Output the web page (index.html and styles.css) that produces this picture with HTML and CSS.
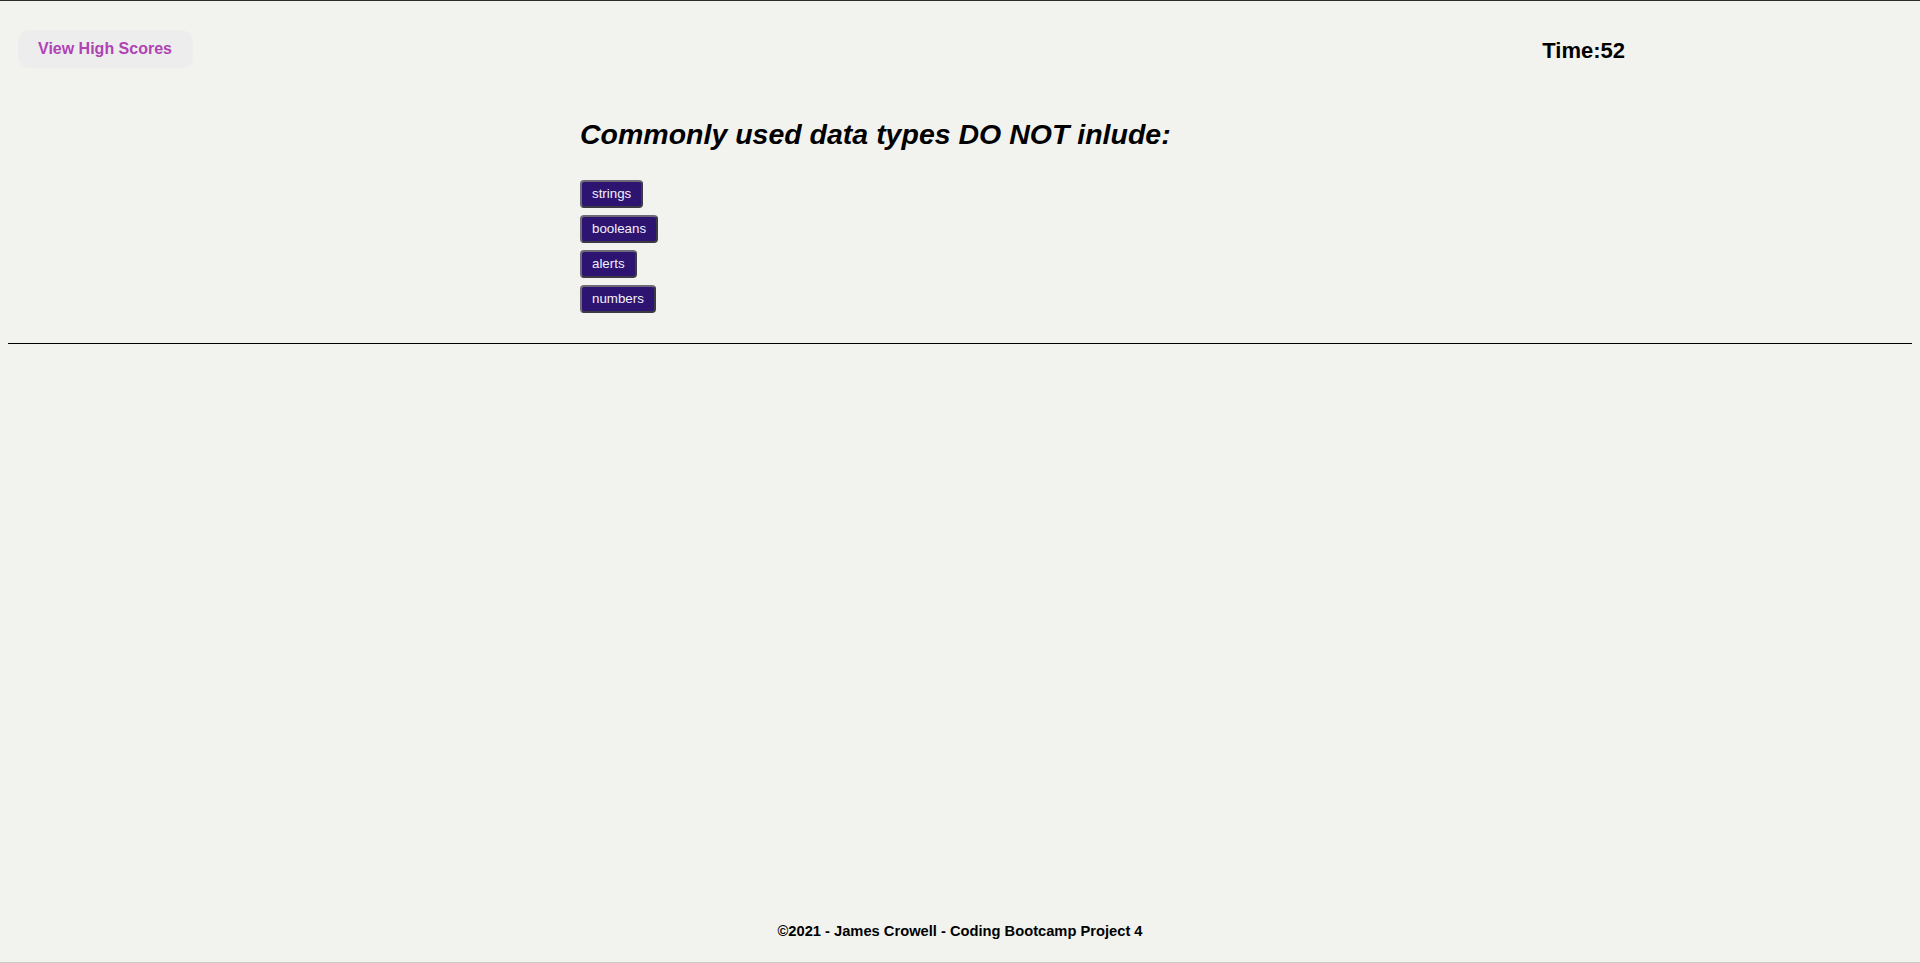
FILE: index.html
```html
<!DOCTYPE html>
<html lang="en">
<head>
<meta charset="utf-8">
<title>Code Quiz</title>
<link rel="stylesheet" href="styles.css">
</head>
<body>
  <header class="topbar">
    <button class="scores-btn" type="button">View High Scores</button>
    <div class="timer">Time:52</div>
  </header>
  <main class="quiz">
    <h1 class="question">Commonly used data types DO NOT inlude:</h1>
    <div class="choices">
      <button class="choice" type="button">strings</button>
      <button class="choice" type="button">booleans</button>
      <button class="choice" type="button">alerts</button>
      <button class="choice" type="button">numbers</button>
    </div>
  </main>
  <hr class="divider">
  <footer class="footer">©2021 - James Crowell - Coding Bootcamp Project 4</footer>
</body>
</html>
```

FILE: styles.css
```css
html {
  height: 100%;
  box-sizing: border-box;
  background: #f2f2ee;
  border-top: 1px solid #2c2c2c;
  border-bottom: 1px solid #c9c9c9;
}

body {
  margin: 0;
  padding: 0 8px;
  height: 100%;
  box-sizing: border-box;
  display: flex;
  flex-direction: column;
  font-family: "Liberation Sans", Arial, sans-serif;
  color: #000;
}

.topbar {
  display: flex;
  justify-content: space-between;
  align-items: center;
  padding: 29px 287px 0 10px;
}

.scores-btn {
  font-family: "Liberation Sans", Arial, sans-serif;
  font-size: 16px;
  font-weight: bold;
  line-height: 18px;
  color: #b043b4;
  background: #ededee;
  border: none;
  border-radius: 12px;
  padding: 10px 21px 10px 20px;
}

.timer {
  margin-top: 3px;
  font-size: 22px;
  font-weight: bold;
  line-height: 26px;
}

.quiz {
  width: 760px;
  margin: 0 auto;
  padding-bottom: 30px;
}

.question {
  margin: 49px 0 29px;
  font-size: 28.5px;
  font-weight: bold;
  font-style: italic;
  line-height: 34px;
}

.choices {
  display: flex;
  flex-direction: column;
  align-items: flex-start;
  gap: 7px;
}

.choice {
  font-family: "Liberation Sans", Arial, sans-serif;
  font-size: 13.33px;
  line-height: 14px;
  color: #f3f0fb;
  background: #2d1470;
  padding: 5px 10px;
  border: 2px solid;
  border-color: #6e6a78 #3c3946 #3c3946 #6e6a78;
  border-radius: 4px;
}

.divider {
  margin: 0;
  border: none;
  border-top: 1px solid #000;
  height: 0;
}

.footer {
  margin-top: auto;
  padding-bottom: 22px;
  text-align: center;
  font-size: 14.7px;
  font-weight: bold;
  line-height: 17px;
}
```
